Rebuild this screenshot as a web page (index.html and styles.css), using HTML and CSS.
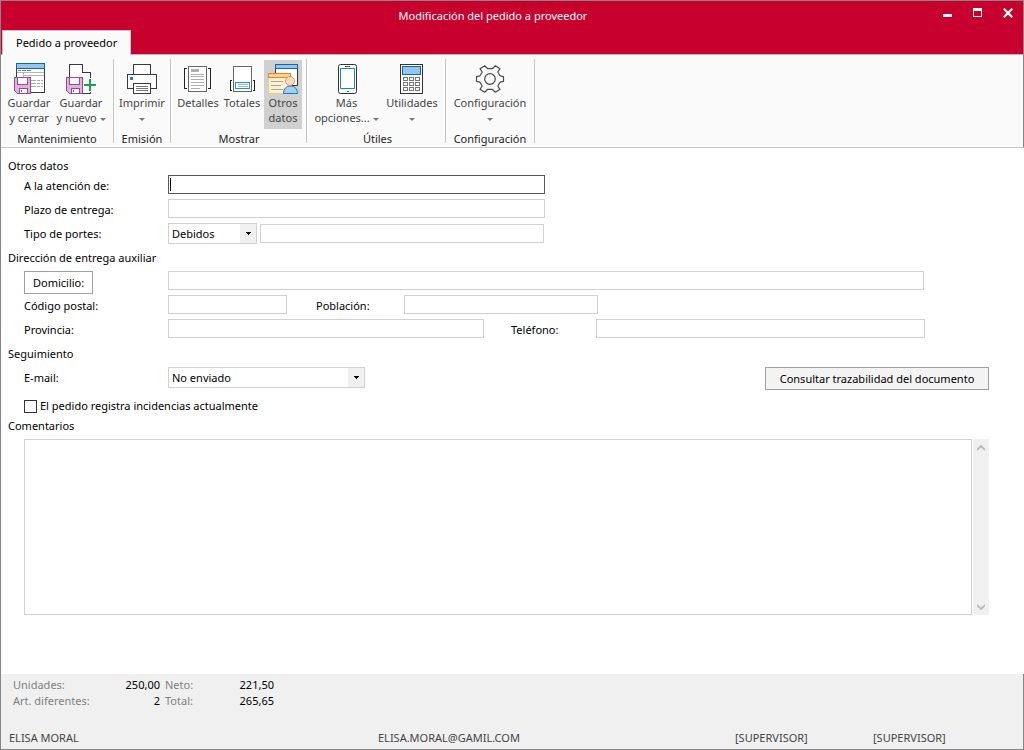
FILE: index.html
```html
<!DOCTYPE html>
<html lang="es">
<head>
<meta charset="utf-8">
<meta name="viewport" content="width=device-width, initial-scale=1">
<title>Modificación del pedido a proveedor</title>
<link rel="stylesheet" href="styles.css">
</head>
<body>
<div class="window">
  <header class="titlebar">
    <h1 class="title">Modificación del pedido a proveedor</h1>
    <div class="window-controls">
      <button type="button" aria-label="Minimizar"><svg width="10" height="10"><path d="M0 6h9v3H0z" fill="#fff"/></svg></button>
      <button type="button" aria-label="Maximizar"><svg width="10" height="10"><path d="M0 0h9v9H0zM1 3v5h7V3z" fill="#fff" fill-rule="evenodd"/></svg></button>
      <button type="button" aria-label="Cerrar"><svg width="10" height="10"><path d="M.7.700l8.600 8.600M9.300.700L.7 9.300" stroke="#fff" stroke-width="2.200"/></svg></button>
    </div>
    <nav class="tabs"><button type="button" class="tab">Pedido a proveedor</button></nav>
  </header>

  <div class="ribbon">
    <section class="group group-save">
      <div class="tools">
        <button type="button" class="tool tool-save">
          <svg class="icon" viewBox="0 0 32 32" shape-rendering="crispEdges">
            <path d="M3.5 7v23.500h28V7" fill="#fff" stroke="#3a3a3a"/>
            <path d="M3.500 1.500h28v5h-28z" fill="#93c6ef" stroke="#1464b0"/>
            <path d="M5 8.500h3m1 0h4m1 0h4" stroke="#777"/>
            <path d="M4 10.500h27M10 13.500h21M10.500 11v5" stroke="#b5b5b5" fill="none"/>
            <path d="M18 18.500h5m1 0h3m1 0h2M18 21.500h5m1 0h3m1 0h2M18 24.500h5m1 0h3m1 0h2" stroke="#aaa"/>
            <path d="M1.500 15.500h16v16h-13l-3-3z" fill="#dcb4dc" stroke="#9c479c"/>
            <path d="M4.500 15.500h10v7h-10zM6.500 26.500h8v5h-8z" fill="#fff" stroke="#9c479c"/>
            <path d="M8.500 28v2" stroke="#9c479c"/>
          </svg>
          <span>Guardar<br>y cerrar</span>
        </button>
        <button type="button" class="tool tool-save">
          <svg class="icon" viewBox="0 0 32 32" shape-rendering="crispEdges">
            <path d="M4.500 31.500v-29H17l8.500 8.500v20.500z" fill="#fff" stroke="#3a3a3a"/>
            <path d="M17.500 2.500v8h8" fill="#fff" stroke="#3a3a3a"/>
            <path d="M18 16h14v14h-14z" fill="#fafafa"/>
            <path d="M1.500 15.500h16v16h-13l-3-3z" fill="#dcb4dc" stroke="#9c479c"/>
            <path d="M4.500 15.500h10v7h-10zM6.500 26.500h8v5h-8z" fill="#fff" stroke="#9c479c"/>
            <path d="M8.500 28v2" stroke="#9c479c"/>
            <path d="M25 17v12M19 23h12" stroke="#16a34f" stroke-width="2"/>
          </svg>
          <span>Guardar<br>y nuevo <i class="arrow"></i></span>
        </button>
      </div>
      <h2>Mantenimiento</h2>
    </section>

    <section class="group">
      <div class="tools">
        <button type="button" class="tool tool-print">
          <svg class="icon" viewBox="0 0 32 32" shape-rendering="crispEdges">
            <g fill="#fff" stroke="#3a3a3a">
              <path d="M7.500 2.500h17v10h-17z"/><path d="M1.500 12.500h29v14h-29z"/><path d="M7.500 21.500h17v10h-17z"/>
            </g>
            <path d="M4 15h3v3H4z" fill="#1c86d1"/>
            <path d="M10 24.500h12M10 26.500h12M10 28.500h12" stroke="#777"/>
          </svg>
          <span>Imprimir<br><i class="arrow"></i></span>
        </button>
      </div>
      <h2>Emisión</h2>
    </section>

    <section class="group group-show">
      <div class="tools">
        <button type="button" class="tool tool-view">
          <svg class="icon" viewBox="0 0 32 32" shape-rendering="crispEdges">
            <path d="M5 6.500H2.500v20H5M26 6.500h2.500v20H26" fill="none" stroke="#222"/>
            <path d="M6.500 4.500h18v25h-18z" fill="#fff" stroke="#666"/>
            <path d="M9 7h8v3H9z" fill="#b0b0b0"/>
            <path d="M9 12.500h13M9 14.500h13M9 17.500h13M9 20.500h13M9 23.500h13M9 26.500h9" stroke="#b0b0b0"/>
          </svg>
          <span>Detalles</span>
        </button>
        <button type="button" class="tool tool-view">
          <svg class="icon" viewBox="0 0 32 32" shape-rendering="crispEdges">
            <path d="M6 18.500H4.500v10H6M27 18.500h1.500v10H27" fill="none" stroke="#222"/>
            <path d="M7.500 4.500h18v25h-18z" fill="#fff" stroke="#666"/>
            <path d="M9.500 20.500h14v6h-14z" fill="#fff" stroke="#169bd8"/>
            <path d="M12 22.500h10M12 24.500h10" stroke="#b0b0b0"/>
          </svg>
          <span>Totales</span>
        </button>
        <button type="button" class="tool tool-active" aria-pressed="true">
          <svg class="icon" viewBox="0 0 32 32">
            <g shape-rendering="crispEdges">
              <path d="M8.500 7v16.500h22V7" fill="#fff" stroke="#333"/>
              <path d="M8.500 2.500h22v4h-22z" fill="#93c6ef" stroke="#1464b0"/>
              <path d="M1.500 16v15.500h22V16" fill="#fdf1d4" stroke="#f1c98a"/>
              <path d="M1.500 11.500h22v4h-22z" fill="#f9d189" stroke="#e2803a"/>
              <path d="M4 19.500h12M4 23.500h10M4 27.500h12" stroke="#a9a39a"/>
            </g>
            <path d="M16.500 31.500c0-5 3-7.500 7-7.500s7 2.500 7 7.500z" fill="#a3cff0" stroke="#1d78bf"/>
            <circle cx="23" cy="19" r="4.500" fill="#fbdcc0" stroke="#d79562"/>
          </svg>
          <span>Otros<br>datos</span>
        </button>
      </div>
      <h2>Mostrar</h2>
    </section>

    <section class="group group-useful">
      <div class="tools">
        <button type="button" class="tool tool-more">
          <svg class="icon" viewBox="0 0 32 32">
            <rect x="7.500" y="2.500" width="18" height="29" rx="2" fill="#fff" stroke="#333"/>
            <path d="M9.500 6.500h14v20h-14z" fill="#fff" stroke="#1886cb"/>
            <path d="M14 4.500h5M16 29.500h2" stroke="#555"/>
          </svg>
          <span>Más<br>opciones... <i class="arrow"></i></span>
        </button>
        <button type="button" class="tool tool-utils">
          <svg class="icon" viewBox="0 0 32 32" shape-rendering="crispEdges">
            <path d="M4.500 2.500h22v29h-22z" fill="#fff" stroke="#333"/>
            <path d="M6.500 4.500h18v8h-18z" fill="#93c6ef" stroke="#1464b0"/>
            <path d="M7.500 15.500h4v3h-4zM13.500 15.500h4v3h-4zM19.500 15.500h4v3h-4zM7.500 20.500h4v3h-4zM13.500 20.500h4v3h-4zM19.500 20.500h4v3h-4zM7.500 25.500h4v3h-4zM13.500 25.500h4v3h-4zM19.500 25.500h4v3h-4z" fill="#fff" stroke="#777"/>
          </svg>
          <span>Utilidades<br><i class="arrow"></i></span>
        </button>
      </div>
      <h2>Útiles</h2>
    </section>

    <section class="group">
      <div class="tools">
        <button type="button" class="tool tool-config">
          <svg class="icon" viewBox="0 0 32 32">
            <g transform="translate(16 17)" fill="none" stroke="#4a4a4a" stroke-width="1.200" stroke-linejoin="round">
              <path d="M13.500-2.300v4.600L10 3.200 7.800 7l2.200 3.300-4.600 2.900L2.200 10.300h-4.400L-5.400 13.200-10 10.300-7.800 7-10 3.200-13.500 2.300v-4.600L-10-3.200-7.800-7-10-10.300l4.600-2.900 3.200 2.900h4.400l3.200-2.900 4.600 2.900L7.800-7 10-3.200z"/>
              <circle r="5.300"/>
            </g>
          </svg>
          <span>Configuración<br><i class="arrow"></i></span>
        </button>
      </div>
      <h2>Configuración</h2>
    </section>
  </div>

  <main class="content">
    <form class="form">
      <h2 class="heading">Otros datos</h2>
      <div class="row row-single">
        <label for="atencion">A la atención de:</label>
        <input type="text" id="atencion" class="field field-focus">
      </div>
      <div class="row row-single">
        <label for="plazo">Plazo de entrega:</label>
        <input type="text" id="plazo" class="field">
      </div>
      <div class="row row-carriage">
        <label for="portes">Tipo de portes:</label>
        <span class="select">
          <select id="portes"><option>Debidos</option></select>
          <svg class="caret" width="16" height="19"><path d="M6 8h5v1h-1v1H9v1H8v-1H7V9H6z"/></svg>
        </span>
        <input type="text" class="field" aria-label="Detalle de portes">
      </div>

      <h2 class="heading">Dirección de entrega auxiliar</h2>
      <div class="row row-address">
        <button type="button" class="button button-white">Domicilio:</button>
        <input type="text" class="field" aria-label="Domicilio">
      </div>
      <div class="row row-town">
        <label for="cp">Código postal:</label>
        <input type="text" id="cp" class="field">
        <label for="poblacion" class="second-label">Población:</label>
        <input type="text" id="poblacion" class="field">
      </div>
      <div class="row row-province">
        <label for="provincia">Provincia:</label>
        <input type="text" id="provincia" class="field">
        <label for="telefono" class="second-label">Teléfono:</label>
        <input type="text" id="telefono" class="field">
      </div>

      <h2 class="heading">Seguimiento</h2>
      <div class="row row-email">
        <label for="email">E-mail:</label>
        <span class="select">
          <select id="email"><option>No enviado</option></select>
          <svg class="caret" width="16" height="19"><path d="M6 8h5v1h-1v1H9v1H8v-1H7V9H6z"/></svg>
        </span>
        <button type="button" class="button button-trace">Consultar trazabilidad del documento</button>
      </div>
      <div class="check">
        <input type="checkbox" id="incidencias">
        <label for="incidencias">El pedido registra incidencias actualmente</label>
      </div>

      <h2 class="heading heading-comments"><label for="comentarios">Comentarios</label></h2>
      <div class="comments">
        <textarea id="comentarios"></textarea>
        <div class="scrollbar">
          <svg width="8" height="6"><path d="M0 5L4 1l4 4" fill="none" stroke="#bdbdbd" stroke-width="2"/></svg>
          <svg width="8" height="6"><path d="M0 1l4 4 4-4" fill="none" stroke="#bdbdbd" stroke-width="2"/></svg>
        </div>
      </div>
    </form>
  </main>

  <footer class="status">
    <table class="totals">
      <tr><th scope="row">Unidades:</th><td>250,00</td><th scope="row">Neto:</th><td>221,50</td></tr>
      <tr><th scope="row">Art. diferentes:</th><td>2</td><th scope="row">Total:</th><td>265,65</td></tr>
    </table>
    <div class="session">
      <span>ELISA MORAL</span>
      <span>ELISA.MORAL@GAMIL.COM</span>
      <span>[SUPERVISOR]</span>
      <span>[SUPERVISOR]</span>
    </div>
  </footer>
</div>
</body>
</html>
```
FILE: styles.css
```css
* { box-sizing: border-box; }

body {
  margin: 0;
  background: #fff;
  color: #000;
  font: 11px/16px "Noto Sans", "Open Sans", sans-serif;
}

button, input, select, textarea { font: inherit; color: inherit; margin: 0; border-radius: 0; }
h1, h2 { margin: 0; font: inherit; }

.window {
  min-height: 100vh;
  display: flex;
  flex-direction: column;
  border: 1px solid #868686;
  border-right: 0;
}

/* Title bar */
.titlebar {
  display: grid;
  grid-template-columns: 1fr auto 1fr;
  grid-template-rows: 29px 25px;
  background: #c8002d;
  border-right: 1px solid #868686;
  box-shadow: inset 0 -1px #b9b9b9;
}
.title { grid-column: 2; padding-top: 7px; padding-right: 38px; color: #fff; }
.window-controls {
  grid-column: 3;
  display: flex;
  justify-content: flex-end;
  gap: 20px;
  padding: 7px 10px 0 0;
}
.window-controls button {
  width: 10px;
  height: 10px;
  padding: 0;
  border: 0;
  background: none;
}
.window-controls svg { display: block; }
.tabs { grid-column: 1 / -1; padding-left: 1px; display: flex; }
.tab {
  padding: 0 13px;
  border: 1px solid #c4c4c4;
  border-bottom: 0;
  background: #fafafa;
}

/* Ribbon */
.ribbon {
  display: flex;
  height: 93px;
  padding-top: 4px;
  background: #fafafa;
  border-right: 1px solid #868686;
  border-bottom: 1px solid #c6c6c6;
}
.group {
  height: 84px;
  padding-top: 1px;
  border-right: 1px solid #c6c6c6;
}
.group-save { padding-left: 2px; padding-right: 2px; }
.group-save .tools { padding-right: 4px; }
.group-show { padding-left: 5px; padding-right: 4px; }
.group-useful { padding-left: 5px; padding-right: 2px; }
.group h2 { text-align: center; line-height: 20px; color: #222; white-space: nowrap; }
.tools { display: flex; height: 69px; }
.tool {
  display: flex;
  flex-direction: column;
  align-items: center;
  padding: 2px 0 0;
  border: 0;
  background: none;
  color: #444;
  line-height: 15px;
  white-space: nowrap;
}
.icon { width: 32px; height: 32px; margin-bottom: 1px; flex: none; }
.tool-save { width: 52px; }
.tool-print { width: 56px; }
.tool-view { width: 44px; }
.tool-active { width: 38px; background: #d0d0d0; }
.tool-more { width: 69px; }
.tool-utils { width: 62px; }
.tool-config { width: 88px; }
.arrow {
  display: inline-block;
  vertical-align: middle;
  border: 3px solid transparent;
  border-top-color: #777;
  border-bottom: 0;
}

/* Form */
.content { flex: 1; padding: 10px 35px 59px 7px; }
.form { display: flex; flex-direction: column; }
.heading { line-height: 16px; }
.row {
  display: grid;
  align-items: start;
  height: 24px;
  margin-left: 16px;
}
.heading + .row { margin-top: 5px; }
.heading + .row-single { margin-top: 1px; }
.row + .heading { margin-top: 3px; }
.row label { line-height: 22px; white-space: nowrap; }
.row-single { grid-template-columns: 144px 377fr 444fr; }
.row-carriage { grid-template-columns: 144px 92px 284fr 445fr; }
.row-address { grid-template-columns: 144px 756fr 65fr; }
.row-town { grid-template-columns: 144px 119fr 29fr 88px 194fr 391fr; }
.row-town .second-label { grid-column: 4; }
.row-province { grid-template-columns: 144px 316fr 27fr 85px 329fr 64fr; }
.row-province .second-label { grid-column: 4; }
.row-email { grid-template-columns: 144px 197fr 400fr 224px; }

.field {
  width: 100%;
  height: 19px;
  padding: 0 3px;
  border: 1px solid #d0d0d0;
  background: #fff;
  outline: 0;
}
.field-focus {
  border-color: #595959;
  background: linear-gradient(#000, #000) 1px 2px / 1px 13px no-repeat #fff;
}
.row-carriage .field { margin-top: 1px; }
.select { position: relative; display: block; }
.row-carriage .select { width: 89px; }
.select select {
  display: block;
  width: 100%;
  height: 21px;
  padding: 0 18px 0 3px;
  border: 1px solid #d0d0d0;
  background: #fff;
  appearance: none;
}
.caret {
  position: absolute;
  top: 1px;
  right: 1px;
  background: #f0f0f0;
  pointer-events: none;
}
.button {
  height: 23px;
  padding: 0 7px;
  border: 1px solid #a0a0a0;
  background: #f3f3f3;
  white-space: nowrap;
}
.button-white { justify-self: start; padding: 0 8px; background: #fff; }
.button-trace { grid-column: 4; }
.check {
  display: flex;
  align-items: center;
  gap: 3px;
  height: 16px;
  margin: 7px 0 4px 16px;
}
.check input {
  width: 13px;
  height: 13px;
  border: 1px solid #333;
  background: #fff;
  appearance: none;
}
.comments {
  display: flex;
  gap: 1px;
  height: 176px;
  margin: 5px 0 0 16px;
}
.comments textarea {
  flex: 1;
  border: 1px solid #d0d0d0;
  background: #fff;
  resize: none;
}
.scrollbar {
  width: 16px;
  display: flex;
  flex-direction: column;
  align-items: center;
  justify-content: space-between;
  padding: 6px 1px 5px 0;
  background: #f0f0f0;
}

/* Status area */
.status {
  padding: 3px 0;
  background: #f0f0f0;
  border-right: 1px solid #868686;
}
.totals { margin-left: 12px; border-spacing: 0; }
.totals th, .totals td { padding: 0; font-weight: 400; line-height: 16px; }
.totals th { color: #808080; text-align: left; }
.totals td { text-align: right; }
.totals th:first-child { width: 92px; }
.totals td:nth-child(2) { width: 55px; }
.totals th:nth-child(3) { width: 49px; padding-left: 5px; }
.totals td:last-child { width: 65px; }
.session {
  display: grid;
  grid-template-columns: 369fr 357fr 138fr 150fr;
  margin-top: 21px;
  padding-left: 8px;
  color: #444;
}
```
